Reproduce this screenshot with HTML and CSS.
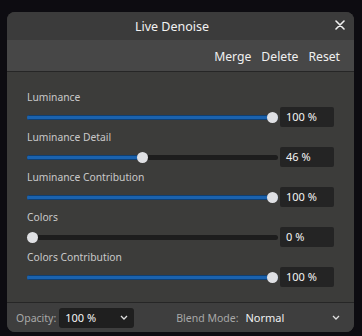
FILE: index.html
```html
<!DOCTYPE html>
<html>
<head>
<meta charset="utf-8">
<link rel="stylesheet" href="styles.css">
</head>
<body>
<div class="window">
  <div class="titlebar">
    <span class="title">Live Denoise</span>
    <svg class="close" width="10" height="10" viewBox="0 0 10 10"><path d="M1 1L9 9M9 1L1 9" stroke="#f0f0f0" stroke-width="1.6" stroke-linecap="round"/></svg>
  </div>
  <div class="toolbar">
    <span class="tool">Merge</span>
    <span class="tool">Delete</span>
    <span class="tool">Reset</span>
  </div>
  <div class="content">
    <div class="row">
      <div class="label">Luminance</div>
      <div class="control">
        <div class="slider"><div class="track"><div class="fill" style="width:100%"></div></div><div class="thumb" style="left:calc((100% - 11px) * 1)"></div></div>
        <div class="value">100 %</div>
      </div>
    </div>
    <div class="row">
      <div class="label">Luminance Detail</div>
      <div class="control">
        <div class="slider"><div class="track"><div class="fill" style="width:46%"></div></div><div class="thumb" style="left:calc((100% - 11px) * 0.46)"></div></div>
        <div class="value">46 %</div>
      </div>
    </div>
    <div class="row">
      <div class="label">Luminance Contribution</div>
      <div class="control">
        <div class="slider"><div class="track"><div class="fill" style="width:100%"></div></div><div class="thumb" style="left:calc((100% - 11px) * 1)"></div></div>
        <div class="value">100 %</div>
      </div>
    </div>
    <div class="row">
      <div class="label">Colors</div>
      <div class="control">
        <div class="slider"><div class="track"><div class="fill" style="width:0%"></div></div><div class="thumb" style="left:calc((100% - 11px) * 0)"></div></div>
        <div class="value">0 %</div>
      </div>
    </div>
    <div class="row">
      <div class="label">Colors Contribution</div>
      <div class="control">
        <div class="slider"><div class="track"><div class="fill" style="width:100%"></div></div><div class="thumb" style="left:calc((100% - 11px) * 1)"></div></div>
        <div class="value">100 %</div>
      </div>
    </div>
  </div>
  <div class="footer">
    <span class="flabel">Opacity:</span>
    <div class="dropdown">
      <span>100 %</span>
      <svg class="chev" width="8" height="5" viewBox="0 0 8 5"><path d="M1 1L4 4L7 1" stroke="#e0e0e0" stroke-width="1.3" fill="none"/></svg>
    </div>
    <span class="flabel blend">Blend Mode:</span>
    <div class="mode">
      <span>Normal</span>
      <svg class="chev" width="8" height="5" viewBox="0 0 8 5"><path d="M1 1L4 4L7 1" stroke="#e0e0e0" stroke-width="1.3" fill="none"/></svg>
    </div>
  </div>
</div>
</body>
</html>
```
FILE: styles.css
```css
* { box-sizing: border-box; }
html, body {
  margin: 0;
  padding: 0;
  background: #0d0c11;
  width: 362px;
  height: 336px;
  overflow: hidden;
  font-family: "Noto Sans", "Open Sans", sans-serif;
}
body { padding: 12px 8px 4px 7px; }
.window {
  width: 347px;
  height: 320px;
  border-radius: 8px;
  overflow: hidden;
  display: flex;
  flex-direction: column;
  background: #3c3c3a;
}
.titlebar {
  height: 28px;
  background: #3b3b3b;
  display: flex;
  align-items: center;
  justify-content: center;
  position: relative;
}
.title {
  color: #f2f2f2;
  font-size: 12.5px;
  margin-left: -17px;
}
.close {
  position: absolute;
  right: 9px;
  top: 8px;
}
.toolbar {
  height: 32px;
  background: #474747;
  border-bottom: 1px solid #262626;
  display: flex;
  justify-content: flex-end;
  align-items: center;
  gap: 10px;
  padding: 2px 14px 0 0;
}
.tool {
  color: #f0f0f0;
  font-size: 12.2px;
}
.content {
  flex: 1;
  padding: 15px 20px 15px 20px;
  display: flex;
  flex-direction: column;
}
.row {
  height: 40px;
  display: flex;
  flex-direction: column;
}
.label {
  height: 20px;
  line-height: 20px;
  font-size: 10.3px;
  color: #c9c9c9;
}
.control {
  height: 20px;
  display: flex;
  align-items: center;
  gap: 2px;
}
.slider {
  flex: 1;
  height: 12px;
  position: relative;
  display: flex;
  align-items: center;
}
.track {
  width: 100%;
  height: 5px;
  border-radius: 3px;
  background: #1d1d1d;
  overflow: hidden;
}
.fill {
  height: 100%;
  background: #1b62ad;
  border-top: 1px solid #0f3f72;
  border-bottom: 1px solid #0f3f72;
}
.thumb {
  position: absolute;
  top: 0.5px;
  width: 11px;
  height: 11px;
  border-radius: 50%;
  background: #dfe0e3;
}
.value {
  width: 54px;
  height: 20px;
  background: #242424;
  border-radius: 2px;
  color: #f4f4f4;
  font-size: 11px;
  line-height: 20px;
  padding-left: 6px;
}
.footer {
  height: 30px;
  border-top: 1px solid #262626;
  background: #3e3e3e;
  display: flex;
  align-items: center;
  padding-left: 9px;
}
.flabel {
  color: #a8a8a8;
  font-size: 10.5px;
}
.dropdown {
  margin-left: 3px;
  width: 75px;
  height: 20px;
  background: #1f1f1f;
  border-radius: 3px;
  display: flex;
  align-items: center;
  justify-content: space-between;
  padding: 0 6px 0 6px;
  color: #f4f4f4;
  font-size: 11px;
}
.blend { margin-left: 42px; }
.mode {
  flex: 1;
  display: flex;
  align-items: center;
  justify-content: space-between;
  padding: 0 14px 0 7px;
  color: #f0f0f0;
  font-size: 11px;
}
```
